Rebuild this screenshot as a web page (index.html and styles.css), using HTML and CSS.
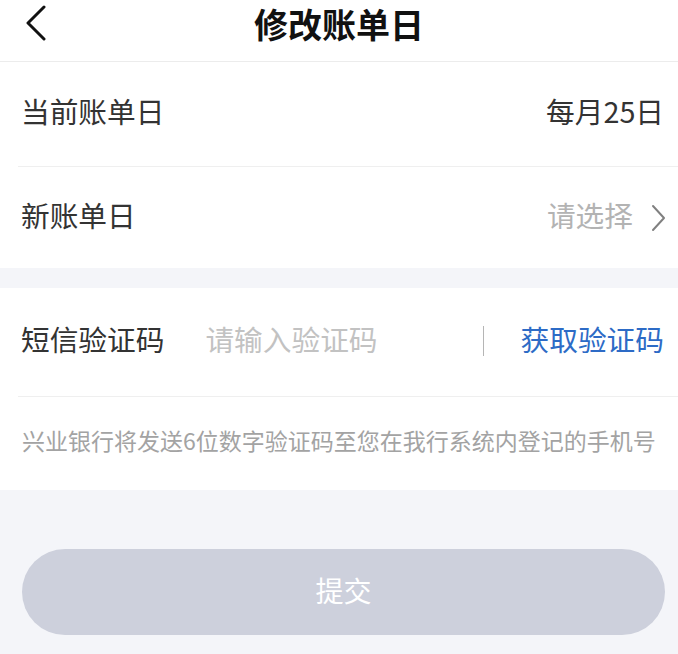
FILE: index.html
```html
<!DOCTYPE html>
<html lang="zh-CN">
<head>
<meta charset="utf-8">
<title>修改账单日</title>
<link rel="stylesheet" href="styles.css">
</head>
<body>
<div class="page">
  <header class="nav">
    <span class="back">
      <svg width="24" height="36" viewBox="0 0 24 36"><polyline points="19,2 3,18 19,34" fill="none" stroke="#111" stroke-width="3" stroke-linecap="round" stroke-linejoin="round"/></svg>
    </span>
    <h1 class="title">修改账单日</h1>
  </header>
  <section class="card">
    <div class="row row-1">
      <span class="label">当前账单日</span>
      <span class="value">每月25日</span>
    </div>
    <div class="row row-2 no-line">
      <span class="label">新账单日</span>
      <span class="select">请选择
        <svg class="chev" width="15" height="28" viewBox="0 0 15 28"><polyline points="2,2 13,14 2,26" fill="none" stroke="#808080" stroke-width="2" stroke-linecap="round" stroke-linejoin="round"/></svg>
      </span>
    </div>
  </section>
  <div class="gap"></div>
  <section class="card">
    <div class="row row-3">
      <span class="label">短信验证码</span>
      <span class="placeholder">请输入验证码</span>
      <span class="sep"></span>
      <span class="code">获取验证码</span>
    </div>
    <div class="hint">兴业银行将发送6位数字验证码至您在我行系统内登记的手机号</div>
  </section>
  <div class="actions">
    <button class="submit" type="button">提交</button>
  </div>
</div>
</body>
</html>
```
FILE: styles.css
```css
html, body {
  margin: 0;
  padding: 0;
}
body {
  background: #f4f5f9;
  font-family: "Noto Sans CJK SC", "Noto Sans", sans-serif;
  color: #333;
}
.page {
  width: 678px;
  min-height: 654px;
  background: #f4f5f9;
}
.nav {
  position: relative;
  box-sizing: border-box;
  height: 62px;
  padding-top: 4px;
  background: #fff;
  border-bottom: 1px solid #ececec;
  display: flex;
  align-items: flex-start;
  justify-content: center;
}
.back {
  position: absolute;
  left: 25px;
  top: 5px;
  width: 24px;
  height: 36px;
}
.back svg { display: block; }
.title {
  margin: 0;
  font-size: 34px;
  line-height: 40px;
  font-weight: 700;
  color: #111;
}
.card {
  background: #fff;
  padding-left: 18px;
}
.row {
  box-sizing: border-box;
  display: flex;
  align-items: center;
  border-bottom: 1px solid #efefef;
  padding: 0 14px 6px 3px;
  font-size: 28.7px;
  line-height: 1.3;
}
.row.no-line { border-bottom: none; }
.row-1 { height: 105px; }
.row-2 { height: 101px; }
.row-3 { height: 109px; }
.label {
  color: #333;
  flex: none;
}
.value {
  margin-left: auto;
  color: #333;
}
.select {
  margin-left: auto;
  color: #b3b3b3;
  display: flex;
  align-items: center;
}
.chev {
  display: block;
  margin-left: 18px;
  margin-right: -2px;
  margin-top: 6px;
}
.placeholder {
  margin-left: 41px;
  color: #c2c2c2;
}
.sep {
  margin-left: auto;
  width: 1px;
  height: 30px;
  background: #b5b5b5;
  margin-right: 37px;
  margin-top: 4px;
}
.code {
  color: #2d6bc6;
}
.hint {
  box-sizing: border-box;
  height: 93px;
  display: flex;
  align-items: center;
  padding: 0 0 6px 4px;
  font-size: 23px;
  line-height: 1.3;
  color: #a3a3a3;
}
.gap {
  height: 20px;
}
.actions {
  padding: 59px 13px 0 22px;
}
.submit {
  box-sizing: border-box;
  display: block;
  width: 643px;
  height: 86px;
  border: none;
  border-radius: 43px;
  background: #cdd0dc;
  color: #fff;
  font-family: "Noto Sans CJK SC", "Noto Sans", sans-serif;
  font-size: 28px;
  line-height: 1.3;
  padding: 0 0 4px 0;
}
```
